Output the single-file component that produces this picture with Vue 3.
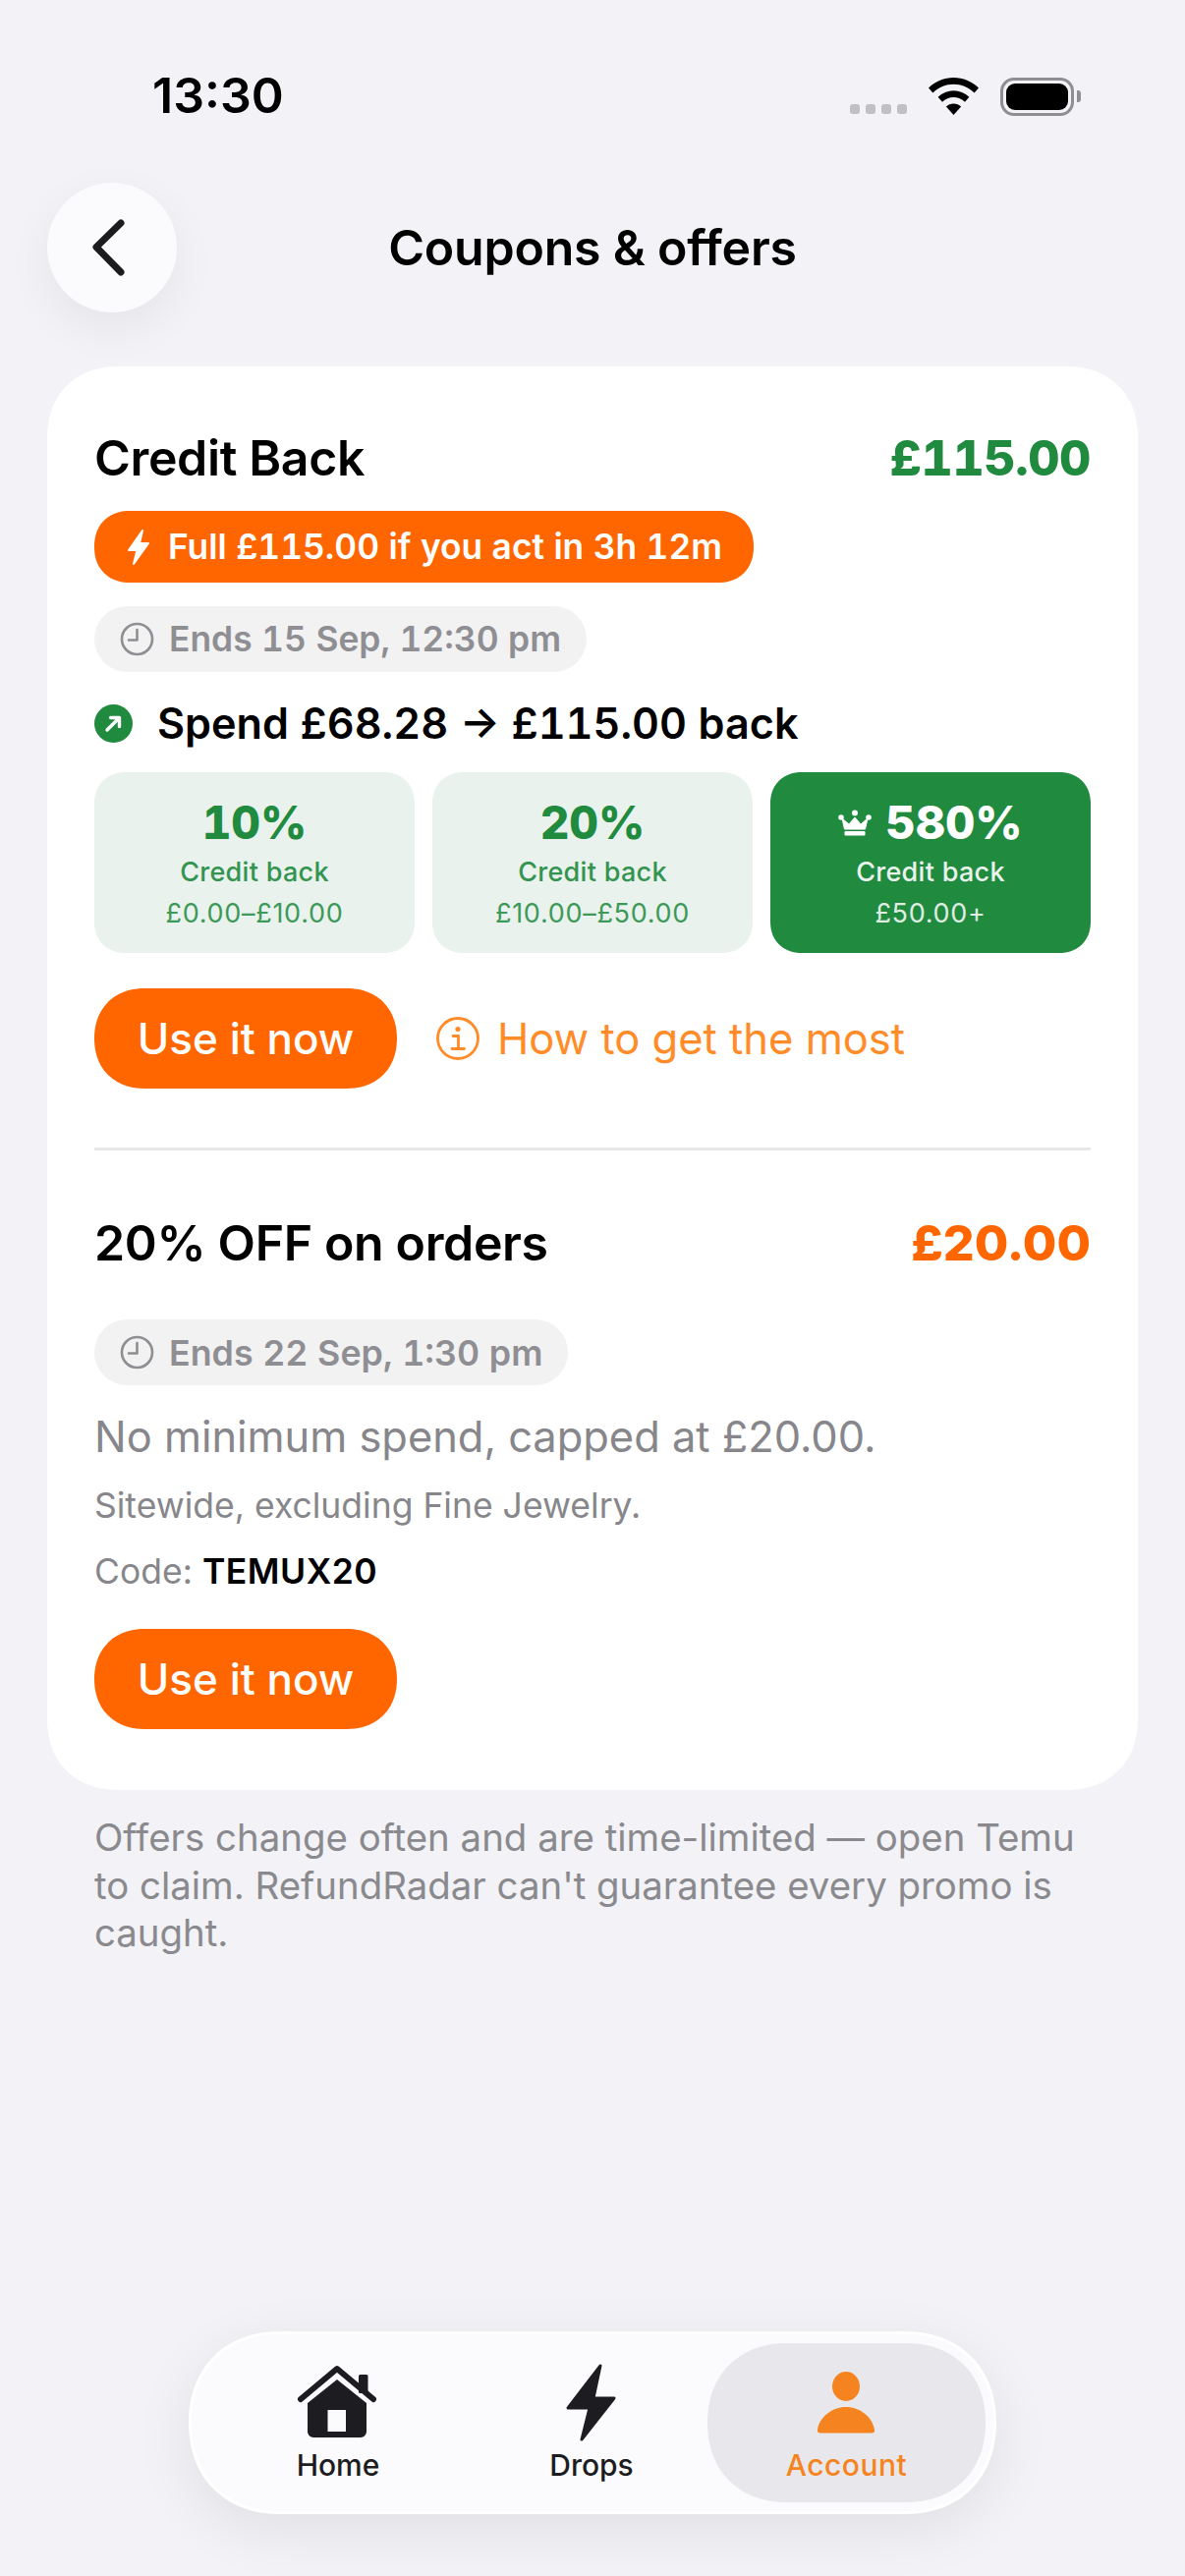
<script setup>
const tiers = [
  { pct: '10%', range: '£0.00–£10.00' },
  { pct: '20%', range: '£10.00–£50.00' },
  { pct: '580%', range: '£50.00+', top: true },
]
</script>

<template>
  <div class="screen">
    <div class="status">
      <span class="time">13:30</span>
      <div class="status-icons">
        <div class="dots"><i></i><i></i><i></i><i></i></div>
        <svg class="wifi" width="51" height="38" viewBox="0 0 51 38">
          <path d="M25.5 0C35 0 44 3.8 51 10.5L46.6 15.6C40.8 10 33.4 6.8 25.5 6.8S10.2 10 4.4 15.6L0 10.5C7 3.8 16 0 25.5 0Z" />
          <path d="M25.5 13.2C31.4 13.2 37 15.5 41.4 19.7L37 24.8C33.9 21.8 29.8 20 25.5 20S17.1 21.8 14 24.8L9.6 19.7C14 15.5 19.6 13.2 25.5 13.2Z" />
          <path d="M25.5 26.4C28.4 26.4 31.1 27.5 33.1 29.4L25.5 38L17.9 29.4C19.9 27.5 22.6 26.4 25.5 26.4Z" />
        </svg>
        <div class="battery"><div class="battery-fill"></div></div>
        <div class="battery-nub"></div>
      </div>
    </div>

    <header class="topbar">
      <button class="back">
        <svg width="36" height="60" viewBox="0 0 36 60">
          <path d="M30 5 L5 29.5 L30 55" fill="none" stroke="#1c1c1e" stroke-width="7" stroke-linecap="round" stroke-linejoin="round" />
        </svg>
      </button>
      <h1 class="title">Coupons &amp; offers</h1>
    </header>

    <section class="card">
      <div class="head head-first">
        <h2>Credit Back</h2>
        <span class="amount green">£115.00</span>
      </div>

      <div class="urgent">
        <svg width="24" height="38" viewBox="0 0 24 38">
          <path d="M16 2 L2 22 H10.5 L7 36 L22 15 H13 Z" fill="#fff" stroke="#fff" stroke-width="2" stroke-linejoin="round" />
        </svg>
        <span>Full £115.00 if you act in 3h 12m</span>
      </div>

      <div class="ends">
        <svg width="35" height="35" viewBox="0 0 35 35">
          <circle cx="17.5" cy="17.5" r="15.5" fill="none" stroke="#8e8e93" stroke-width="2.6" />
          <path d="M17.5 8 V18.5 H9" fill="none" stroke="#8e8e93" stroke-width="2.6" stroke-linecap="round" stroke-linejoin="round" />
        </svg>
        <span>Ends 15 Sep, 12:30 pm</span>
      </div>

      <div class="spend">
        <svg width="39" height="39" viewBox="0 0 39 39">
          <circle cx="19.5" cy="19.5" r="19.5" fill="#208a3f" />
          <path d="M13 26 L25 14 M16.5 13.5 H25.5 V22.5" fill="none" stroke="#fff" stroke-width="3.4" stroke-linecap="round" stroke-linejoin="round" />
        </svg>
        <span>Spend £68.28 → £115.00 back</span>
      </div>

      <div class="tiers">
        <div v-for="t in tiers" :key="t.pct" class="tier" :class="{ 'tier-top': t.top }">
          <div class="tier-pct">
            <svg v-if="t.top" width="34" height="27" viewBox="0 0 34 27">
              <path d="M17 8 L23 15 L30 9 L27.5 20 H6.5 L4 9 L11 15 Z" fill="#fff" stroke="#fff" stroke-width="1" stroke-linejoin="round" />
              <circle cx="17" cy="3.5" r="3" fill="#fff" />
              <circle cx="3" cy="8" r="2.8" fill="#fff" />
              <circle cx="31" cy="8" r="2.8" fill="#fff" />
              <rect x="6.5" y="22" width="21" height="4.5" rx="1.2" fill="#fff" />
            </svg>
            <span>{{ t.pct }}</span>
          </div>
          <div class="tier-label">Credit back</div>
          <div class="tier-range">{{ t.range }}</div>
        </div>
      </div>

      <div class="actions">
        <button class="use">Use it now</button>
        <div class="how">
          <svg width="44" height="46" viewBox="0 0 44 46">
            <circle cx="22" cy="23" r="20.5" fill="none" stroke="#ff8c28" stroke-width="2.8" />
            <circle cx="22" cy="13.5" r="2.6" fill="#ff8c28" />
            <path d="M17 20.5 H22.5 V33 M16 33.5 H28.5" fill="none" stroke="#ff8c28" stroke-width="2.8" stroke-linecap="round" stroke-linejoin="round" />
          </svg>
          <span>How to get the most</span>
        </div>
      </div>

      <div class="divider"></div>

      <div class="head head-second">
        <h2>20% OFF on orders</h2>
        <span class="amount orange">£20.00</span>
      </div>

      <div class="ends ends-second">
        <svg width="35" height="35" viewBox="0 0 35 35">
          <circle cx="17.5" cy="17.5" r="15.5" fill="none" stroke="#8e8e93" stroke-width="2.6" />
          <path d="M17.5 8 V18.5 H9" fill="none" stroke="#8e8e93" stroke-width="2.6" stroke-linecap="round" stroke-linejoin="round" />
        </svg>
        <span>Ends 22 Sep, 1:30 pm</span>
      </div>

      <p class="desc">No minimum spend, capped at £20.00.</p>
      <p class="small small-site">Sitewide, excluding Fine Jewelry.</p>
      <p class="small small-code">Code: <b>TEMUX20</b></p>

      <button class="use use-second">Use it now</button>
    </section>

    <p class="note">Offers change often and are time-limited — open Temu to claim. RefundRadar can't guarantee every promo is caught.</p>

    <nav class="tabbar">
      <div class="tab">
        <svg width="90" height="80" viewBox="0 0 90 80">
          <path d="M7 37 L44 6 L81 37" fill="none" stroke="#1c1c21" stroke-width="6" stroke-linecap="round" stroke-linejoin="round" />
          <rect x="66" y="12" width="9.5" height="19" rx="1.5" fill="#1c1c21" />
          <path fill-rule="evenodd" d="M44 17 L74 41 V70 a6 6 0 0 1 -6 6 H20 a6 6 0 0 1 -6 -6 V41 Z M34.5 48 V70 H53 V48 Z" fill="#1c1c21" />
        </svg>
        <span>Home</span>
      </div>
      <div class="tab">
        <svg width="60" height="80" viewBox="0 0 60 80">
          <path d="M39 3 L6 46 H28 L20 78 L53 36 H32 Z" fill="#1c1c21" stroke="#1c1c21" stroke-width="3" stroke-linejoin="round" />
        </svg>
        <span>Drops</span>
      </div>
      <div class="tab tab-active">
        <svg width="64" height="80" viewBox="0 0 64 80">
          <ellipse cx="31" cy="24" rx="14" ry="15" fill="#f58420" />
          <path d="M31 45 C45 45 58 55 60 68 C60.5 70.5 59 71.5 57 71.5 H5 C3 71.5 1.5 70.5 2 68 C4 55 17 45 31 45 Z" fill="#f58420" />
        </svg>
        <span>Account</span>
      </div>
    </nav>
  </div>
</template>

<style>
html,
body {
  margin: 0;
  background: #f2f2f7;
}
</style>

<style scoped>
.screen {
  width: 1206px;
  height: 2622px;
  display: flex;
  flex-direction: column;
  background: #f2f2f7;
  color: #000;
  font-family: Inter, "Noto Sans", sans-serif;
  overflow: hidden;
}

/* status bar */
.status {
  box-sizing: border-box;
  height: 186px;
  padding: 71px 106px 0 155px;
  display: flex;
  justify-content: space-between;
  align-items: flex-start;
}
.time {
  font-size: 50px;
  line-height: 52px;
  font-weight: 600;
}
.status-icons {
  display: flex;
  align-items: flex-start;
  margin-top: 8px;
}
.dots {
  display: flex;
  gap: 6px;
  margin: 27px 22px 0 0;
}
.dots i {
  width: 10px;
  height: 10px;
  border-radius: 3px;
  background: #c0c0c4;
}
.wifi {
  fill: #000;
  margin-right: 22px;
}
.battery {
  box-sizing: border-box;
  width: 75px;
  height: 39px;
  border: 3px solid #8e8e93;
  border-radius: 14px;
  padding: 3px;
}
.battery-fill {
  height: 100%;
  background: #000;
  border-radius: 9px;
}
.battery-nub {
  width: 4px;
  height: 12px;
  margin: 13px 0 0 3px;
  background: #8e8e93;
  border-radius: 0 3px 3px 0;
}

/* top bar */
.topbar {
  display: grid;
  grid-template-columns: 132px 1fr 132px;
  align-items: center;
  padding: 0 48px;
}
.back {
  width: 132px;
  height: 132px;
  padding: 0;
  border: 0;
  border-radius: 50%;
  background: #fbfbfe;
  box-shadow: 0 16px 48px rgba(0, 0, 0, 0.06);
  display: flex;
  align-items: center;
  justify-content: center;
}
.back svg {
  margin-left: -6px;
}
.title {
  margin: 0;
  text-align: center;
  font-size: 50px;
  line-height: 60px;
  font-weight: 600;
  letter-spacing: -0.2px;
}

/* card */
.card {
  margin: 55px 48px 0;
  padding: 63px 48px 62px;
  background: #fff;
  border-radius: 72px;
  corner-shape: superellipse(1.12);
}
.head {
  display: flex;
  justify-content: space-between;
  align-items: center;
  height: 60px;
}
.head h2 {
  margin: 0;
  font-size: 50px;
  line-height: 60px;
  font-weight: 600;
  letter-spacing: -0.35px;
}
.amount {
  font-size: 50px;
  line-height: 60px;
  font-weight: 800;
}
.green {
  color: #208a3f;
  font-variant-numeric: tabular-nums;
  letter-spacing: -0.4px;
}
.orange {
  color: #ff6600;
}
.head-second {
  margin-top: 64px;
}
.urgent {
  display: inline-flex;
  align-items: center;
  gap: 18px;
  box-sizing: border-box;
  height: 73px;
  margin-top: 24px;
  padding: 0 32px 0 33px;
  border-radius: 36px;
  corner-shape: superellipse(1.12);
  background: #ff6600;
  color: #fff;
  font-size: 35.3px;
  font-weight: 600;
  font-variant-numeric: tabular-nums;
  vertical-align: top;
}
.ends {
  display: flex;
  width: fit-content;
  align-items: center;
  gap: 15px;
  box-sizing: border-box;
  height: 67px;
  margin-top: 24px;
  padding: 0 26px;
  border-radius: 34px;
  background: #f2f2f3;
  color: #8e8e93;
  font-size: 35.4px;
  font-weight: 600;
  font-variant-numeric: tabular-nums;
}
.ends-second {
  margin-top: 48px;
  font-size: 35.8px;
}
.spend {
  display: flex;
  align-items: center;
  gap: 25px;
  height: 50px;
  margin-top: 27px;
  font-size: 43.2px;
  font-weight: 600;
  font-variant-numeric: tabular-nums;
}
.tiers {
  display: grid;
  grid-template-columns: repeat(3, 1fr);
  gap: 18px;
  margin-top: 25px;
}
.tier {
  box-sizing: border-box;
  height: 184px;
  padding-top: 26px;
  border-radius: 32px;
  corner-shape: superellipse(1.12);
  background: #e9f2ec;
  color: #208a3f;
  text-align: center;
}
.tier-top {
  background: #208a3f;
  color: #fff;
}
.tier-pct {
  display: flex;
  justify-content: center;
  align-items: center;
  gap: 14px;
  height: 50px;
  font-size: 46px;
  line-height: 50px;
  font-weight: 800;
  font-variant-numeric: tabular-nums;
}
.tier-top .tier-pct {
  font-size: 47px;
}
.tier-label {
  margin-top: 8px;
  font-size: 27px;
  line-height: 36px;
  font-weight: 500;
  letter-spacing: 0.3px;
  opacity: 0.9;
}
.tier-range {
  margin-top: 6px;
  font-size: 27px;
  line-height: 36px;
  letter-spacing: 0.7px;
  opacity: 0.85;
}
.actions {
  display: flex;
  align-items: center;
  gap: 40px;
  margin-top: 36px;
}
.use {
  display: block;
  width: 308px;
  height: 102px;
  padding: 0;
  border: 0;
  border-radius: 51px;
  corner-shape: superellipse(1.12);
  background: #ff6600;
  color: #fff;
  font-family: inherit;
  font-size: 44px;
  font-weight: 500;
}
.use-second {
  margin-top: 36px;
}
.how {
  display: flex;
  align-items: center;
  gap: 18px;
  color: #ff8c28;
  font-size: 43.5px;
}
.divider {
  height: 3px;
  margin-top: 60px;
  background: #e8e8ea;
}
.desc {
  margin: 24px 0 0;
  font-size: 43.4px;
  line-height: 56px;
  color: #86868b;
}
.small {
  margin: 0;
  font-size: 35.5px;
  line-height: 44px;
  color: #86868b;
}
.small-site {
  margin-top: 21px;
}
.small-code {
  margin-top: 23px;
}
.small b {
  color: #000;
  font-weight: 600;
  letter-spacing: 0.5px;
}

.note {
  margin: 24px 96px 0;
  font-size: 38.4px;
  line-height: 48.5px;
  color: #8a8a8e;
}

/* tab bar */
.tabbar {
  display: grid;
  grid-template-columns: 280px 236px 283px;
  box-sizing: border-box;
  width: 822px;
  height: 186px;
  margin: auto 0 63px 192px;
  padding: 9px;
  border: 3px solid #fff;
  border-radius: 93px;
  corner-shape: superellipse(1.12);
  background: #fbfbfe;
  box-shadow: 0 16px 60px rgba(0, 0, 0, 0.08);
}
.tab {
  display: flex;
  flex-direction: column;
  align-items: center;
  padding-top: 20px;
  color: #1c1c21;
  font-size: 30px;
  font-weight: 500;
}
.tab span {
  line-height: 36px;
  margin-top: 6px;
}
.tab-active {
  border-radius: 81px;
  corner-shape: superellipse(1.12);
  background: #e8e8ec;
  color: #f58420;
  letter-spacing: 0.5px;
}
</style>
